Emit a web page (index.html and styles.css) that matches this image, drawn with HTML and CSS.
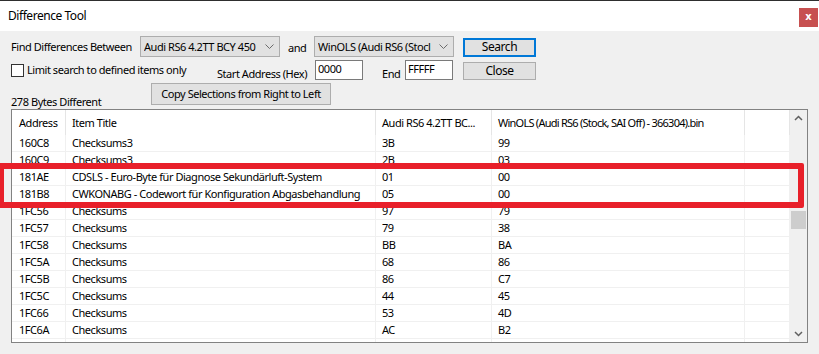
FILE: index.html
```html
<!DOCTYPE html>
<html lang="en">
<head>
    <meta charset="UTF-8">
    <title>Difference Tool</title>
    <link rel="stylesheet" href="styles.css">
</head>
<body>
    <div class="window">
        <div class="titlebar">
            <span class="title">Difference Tool</span>
            <span class="close-x">x</span>
        </div>

        <div class="form">
            <div class="row row1">
                <span class="lbl lbl-find">Find Differences Between</span>
                <div class="select">
                    <span class="select-text">Audi RS6 4.2TT BCY 450</span>
                    <svg class="chev" width="9" height="5" viewBox="0 0 9 5"><polyline points="0.5,0.5 4.5,4.5 8.5,0.5" fill="none" stroke="#6b6b6b" stroke-width="1"/></svg>
                </div>
                <span class="lbl lbl-and">and</span>
                <div class="select">
                    <span class="select-text">WinOLS (Audi RS6 (Stocl</span>
                    <svg class="chev" width="9" height="5" viewBox="0 0 9 5"><polyline points="0.5,0.5 4.5,4.5 8.5,0.5" fill="none" stroke="#6b6b6b" stroke-width="1"/></svg>
                </div>
                <button class="btn btn-default">Search</button>
            </div>

            <div class="row row2">
                <label class="check">
                    <span class="box"></span>
                    <span>Limit search to defined items only</span>
                </label>
                <span class="lbl lbl-start">Start Address (Hex)</span>
                <div class="field">0000</div>
                <span class="lbl lbl-end">End</span>
                <div class="field">FFFFF</div>
                <button class="btn btn-close">Close</button>
            </div>

            <div class="row row3">
                <span class="lbl lbl-count">278 Bytes Different</span>
                <button class="btn btn-copy">Copy Selections from Right to Left</button>
            </div>
        </div>

        <div class="list">
            <div class="grid">
                <div class="line head">
                    <span>Address</span><span>Item Title</span><span>Audi RS6 4.2TT BC...</span><span class="tight">WinOLS (Audi RS6 (Stock, SAI Off) - 366304).bin</span><span></span>
                </div>
                <div class="line"><span>160C8</span><span>Checksums3</span><span>3B</span><span>99</span><span></span></div>
                <div class="line"><span>160C9</span><span>Checksums3</span><span>2B</span><span>03</span><span></span></div>
                <div class="line"><span>181AE</span><span>CDSLS - Euro-Byte für Diagnose Sekundärluft-System</span><span>01</span><span>00</span><span></span></div>
                <div class="line"><span>181B8</span><span>CWKONABG - Codewort für Konfiguration Abgasbehandlung</span><span>05</span><span>00</span><span></span></div>
                <div class="line"><span>1FC56</span><span>Checksums</span><span>97</span><span>79</span><span></span></div>
                <div class="line"><span>1FC57</span><span>Checksums</span><span>79</span><span>38</span><span></span></div>
                <div class="line"><span>1FC58</span><span>Checksums</span><span>BB</span><span>BA</span><span></span></div>
                <div class="line"><span>1FC5A</span><span>Checksums</span><span>68</span><span>86</span><span></span></div>
                <div class="line"><span>1FC5B</span><span>Checksums</span><span>86</span><span>C7</span><span></span></div>
                <div class="line"><span>1FC5C</span><span>Checksums</span><span>44</span><span>45</span><span></span></div>
                <div class="line"><span>1FC66</span><span>Checksums</span><span>53</span><span>4D</span><span></span></div>
                <div class="line"><span>1FC6A</span><span>Checksums</span><span>AC</span><span>B2</span><span></span></div>
                <div class="line"><span></span><span></span><span></span><span></span><span></span></div>
            </div>
            <div class="scrollbar">
                <svg class="arrow" width="17" height="17" viewBox="0 0 17 17"><polyline points="5,10 8.5,6.5 12,10" fill="none" stroke="#606060" stroke-width="1.5"/></svg>
                <div class="track">
                    <div class="thumb"></div>
                </div>
                <svg class="arrow" width="17" height="17" viewBox="0 0 17 17"><polyline points="5,7 8.5,10.5 12,7" fill="none" stroke="#606060" stroke-width="1.5"/></svg>
            </div>
        </div>

        <!-- highlight drawn over the two rows -->
        <div class="marker"></div>
    </div>
</body>
</html>
```

FILE: styles.css
```css
* {
    box-sizing: border-box;
}

body {
    margin: 0;
    font-family: "Noto Sans", "Open Sans", sans-serif;
    font-size: 11px;
    letter-spacing: -0.45px;
    color: #000;
}

.window {
    position: relative;
    width: 819px;
    height: 354px;
    background: #f0f0f0;
    border-top: 1px solid #2e2e2e;
    overflow: hidden;
}

.titlebar {
    height: 30px;
    background: #fff;
    display: flex;
    align-items: flex-start;
    padding-left: 8px;
}

.title {
    font-size: 12px;
    line-height: 14px;
    margin-top: 8px;
}

.close-x {
    margin-left: auto;
    margin-top: 7px;
    margin-right: 1px;
    width: 19px;
    height: 19px;
    background: #c75050;
    color: #fff;
    font-family: "DejaVu Sans", sans-serif;
    font-weight: bold;
    font-size: 10px;
    letter-spacing: 0;
    line-height: 17px;
    text-align: center;
}

.form {
    padding-left: 11px;
}

.row {
    display: flex;
    align-items: center;
}

.row1 {
    margin-top: 5px;
    height: 21px;
}

.row2 {
    margin-top: 3px;
    height: 20px;
}

.row3 {
    margin-top: 3px;
    height: 22px;
}

.lbl {
    white-space: nowrap;
    line-height: 14px;
}

.lbl-find {
    width: 129px;
    padding-top: 1px;
}

.lbl-and {
    width: 34px;
    padding-left: 8px;
    padding-top: 3px;
}

.select {
    width: 140px;
    height: 21px;
    background: #e1e1e1;
    border: 1px solid #adadad;
    display: flex;
    align-items: center;
    padding-left: 3px;
    padding-right: 5px;
    overflow: hidden;
}

.select-text {
    flex: 1;
    white-space: nowrap;
    overflow: hidden;
    line-height: 14px;
}

.chev {
    flex: none;
    margin-left: 4px;
}

.btn {
    font-family: inherit;
    font-size: 12px;
    letter-spacing: -0.45px;
    color: #000;
    background: #e1e1e1;
    border: 1px solid #adadad;
    padding: 0;
    line-height: 14px;
}

.btn-default {
    width: 73px;
    height: 19px;
    margin-left: 9px;
    margin-top: 1px;
    border: 2px solid #0078d7;
}

.btn-close {
    width: 73px;
    height: 18px;
    margin-left: 10px;
    margin-top: 2px;
}

.btn-copy {
    width: 180px;
    height: 22px;
    font-size: 11px;
}

.check {
    width: 206px;
    display: flex;
    align-items: center;
    gap: 3px;
    white-space: nowrap;
    line-height: 14px;
}

.box {
    width: 13px;
    height: 13px;
    margin-top: 1px;
    background: #fff;
    border: 1px solid #333;
    flex: none;
}

.lbl-start {
    width: 98px;
    padding-top: 7px;
}

.lbl-end {
    width: 42px;
    padding-left: 19px;
    padding-top: 7px;
}

.field {
    width: 48px;
    height: 20px;
    background: #fff;
    border: 1px solid #7a7a7a;
    padding-left: 2px;
    line-height: 16px;
}

.lbl-count {
    width: 140px;
    height: 22px;
    padding-top: 12px;
    align-self: flex-start;
}

.list {
    margin-top: 4px;
    margin-left: 11px;
    width: 797px;
    height: 234px;
    background: #fff;
    border: 1px solid #828282;
    display: flex;
}

.grid {
    width: 778px;
    overflow: hidden;
}

.line {
    display: grid;
    grid-template-columns: 54px 310px 116px 253px 45px;
    height: 17px;
    border-bottom: 1px solid #f0f0f0;
    line-height: 16px;
}

.line span {
    border-right: 1px solid #f0f0f0;
    padding-left: 6px;
    white-space: nowrap;
    overflow: hidden;
}

.line span:first-child {
    padding-left: 7px;
}

.line.head {
    height: 25px;
    line-height: 25px;
    border-bottom: none;
}

.line.head span {
    border-right-color: #e5e5e5;
}

.line.head .tight {
    letter-spacing: -0.75px;
}

.scrollbar {
    width: 17px;
    background: #f0f0f0;
    display: flex;
    flex-direction: column;
}

.arrow {
    flex: none;
    display: block;
}

.track {
    flex: 1;
    padding-top: 84px;
}

.thumb {
    margin: 0 1px;
    height: 18px;
    background: #cdcdcd;
}

.marker {
    position: absolute;
    left: -2px;
    top: 162px;
    width: 806px;
    height: 45px;
    border: 6px solid #e8202a;
    border-radius: 2px;
}
```
